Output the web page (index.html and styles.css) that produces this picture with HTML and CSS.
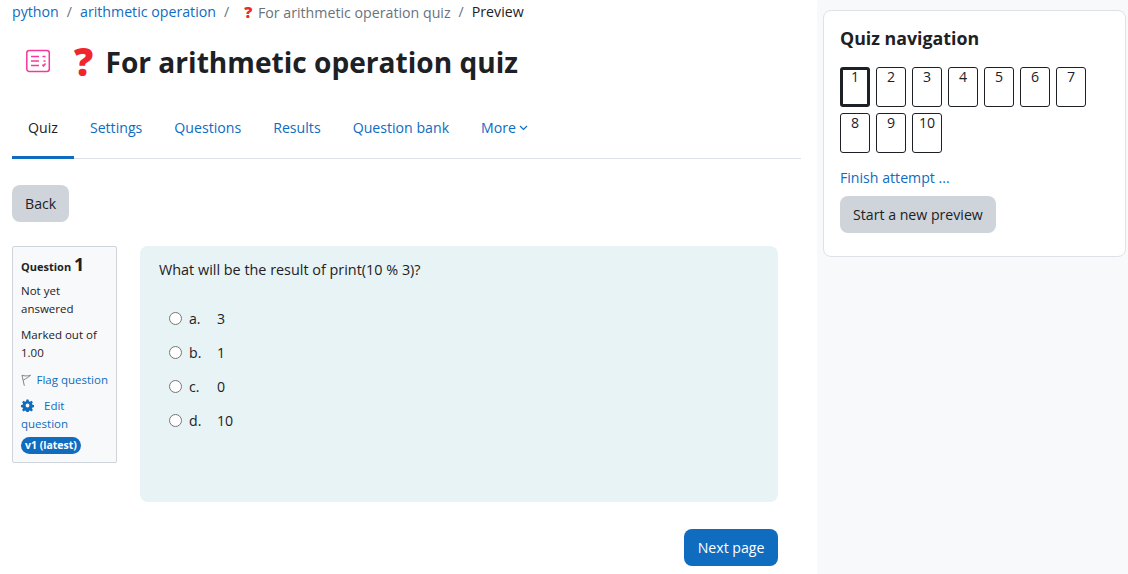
FILE: index.html
```html
<!DOCTYPE html>
<html lang="en">
<head>
    <meta charset="UTF-8">
    <meta name="viewport" content="width=device-width, initial-scale=1.0">
    <title>For arithmetic operation quiz</title>
    <link rel="stylesheet" href="styles.css">
</head>
<body>
    <div class="page">
        <div class="main">
            <div class="breadcrumb">
                <a href="#">python</a><span class="sep">/</span>
                <a href="#">arithmetic operation</a><span class="sep">/</span>
                <span class="crumb-muted"><span class="mark-small">?</span> For arithmetic operation quiz</span><span class="sep">/</span>
                <span>Preview</span>
            </div>
            <div class="heading">
                <span class="quiz-icon">
                    <svg width="26" height="24" viewBox="0 0 26 24" fill="none" stroke="#f7379b" stroke-width="1.5">
                        <rect x="1.800" y="1.500" width="22.500" height="21" rx="2.500"/>
                        <path d="M6 7.500h8M6 12h8M6 16.500h8" stroke-width="1.500"/>
                        <path d="M17.500 7.500h3M18.500 12h2M17.500 15.500l1 1.500 2-2.500" stroke-width="1.500"/>
                    </svg>
                </span>
                <h1><span class="mark">?</span> For arithmetic operation quiz</h1>
            </div>
            <div class="tabs">
                <a href="#" class="tab active">Quiz</a>
                <a href="#" class="tab">Settings</a>
                <a href="#" class="tab">Questions</a>
                <a href="#" class="tab">Results</a>
                <a href="#" class="tab">Question bank</a>
                <a href="#" class="tab">More
                    <svg width="9" height="6" viewBox="0 0 9 6" fill="none" stroke="#0f6cbf" stroke-width="1.200"><path d="M1 1l3.500 3.500L8 1"/></svg>
                </a>
            </div>
            <div class="back-row"><a href="#" class="btn">Back</a></div>
            <div class="question">
                <div class="info">
                    <div class="q-title">Question <span class="q-no">1</span></div>
                    <div class="info-text">Not yet answered</div>
                    <div class="info-text">Marked out of 1.00</div>
                    <div class="flag">
                        <svg width="11" height="13" viewBox="0 0 11 13" fill="none" stroke="#7a7f84" stroke-width="1"><path d="M1 1l2.500 11M1 1c3 1 6 1 9 0C8 3 6 4 2.500 6"/></svg>
                        <a href="#">Flag question</a>
                    </div>
                    <div class="edit">
                        <svg class="gear" width="13" height="13" viewBox="0 0 24 24"><path fill="#0f6cbf" fill-rule="evenodd" d="M10 1h4l.6 3.100 2 .8 2.600-1.800 2.800 2.800-1.800 2.600.8 2 3 .5v4l-3 .6-.8 2 1.800 2.600-2.800 2.800-2.600-1.800-2 .8-.6 3.100h-4l-.6-3.100-2-.8-2.600 1.800-2.800-2.800 1.800-2.600-.8-2-3-.6v-4l3-.5.8-2-1.800-2.600 2.800-2.800 2.600 1.800 2-.8zM12 8.500a3.500 3.500 0 1 0 0 7 3.500 3.500 0 0 0 0-7z"/></svg>
                        <a href="#">Edit question</a>
                    </div>
                    <span class="badge">v1 (latest)</span>
                </div>
                <div class="content">
                    <div class="q-text">What will be the result of print(10 % 3)?</div>
                    <div class="answers">
                        <label class="answer"><span class="radio"></span><span class="letter">a.</span>3</label>
                        <label class="answer"><span class="radio"></span><span class="letter">b.</span>1</label>
                        <label class="answer"><span class="radio"></span><span class="letter">c.</span>0</label>
                        <label class="answer"><span class="radio"></span><span class="letter">d.</span>10</label>
                    </div>
                </div>
            </div>
            <div class="next-row"><a href="#" class="btn btn-primary">Next page</a></div>
        </div>
        <div class="side">
            <div class="card">
                <h2>Quiz navigation</h2>
                <div class="nav-grid">
                    <a href="#" class="nav-btn current">1</a>
                    <a href="#" class="nav-btn">2</a>
                    <a href="#" class="nav-btn">3</a>
                    <a href="#" class="nav-btn">4</a>
                    <a href="#" class="nav-btn">5</a>
                    <a href="#" class="nav-btn">6</a>
                    <a href="#" class="nav-btn">7</a>
                    <a href="#" class="nav-btn">8</a>
                    <a href="#" class="nav-btn">9</a>
                    <a href="#" class="nav-btn">10</a>
                </div>
                <a href="#" class="finish">Finish attempt ...</a>
                <a href="#" class="btn">Start a new preview</a>
            </div>
        </div>
    </div>
</body>
</html>
```

FILE: styles.css
```css
html, body {
    margin: 0;
    height: 574px;
    overflow: hidden;
}
body {
    font-family: "Open Sans", "Noto Sans", sans-serif;
    font-size: 14.15px;
    color: #1d2125;
    background: #fff;
}
a {
    color: #0f6cbf;
    text-decoration: none;
}
.page {
    display: flex;
    height: 574px;
}
.main {
    width: 817px;
    box-sizing: border-box;
    padding: 0 16px 0 12px;
}
.side {
    flex: 1;
    background: #f8f9fa;
    padding: 10px 2px 0 6px;
}
.breadcrumb {
    display: flex;
    align-items: center;
    height: 23px;
    font-size: 14.2px;
    white-space: nowrap;
}
.sep {
    margin: 0 8px;
    color: #6a737b;
}
.crumb-muted {
    color: #6a737b;
}
.mark-small {
    color: #f0262c;
    font-weight: 800;
    font-size: 16px;
    margin: 0 2px 0 7px;
}
.heading {
    display: flex;
    align-items: center;
    height: 54px;
    margin-top: 11px;
}
.quiz-icon {
    display: flex;
    margin: 0 23px 0 13px;
}
h1 {
    margin: 0;
    font-size: 28.100px;
    font-weight: 700;
    white-space: nowrap;
}
.mark {
    color: #f0262c;
    font-weight: 800;
    font-size: 38px;
    line-height: 1;
    vertical-align: -3px;
    margin-right: 5px;
}
.tabs {
    display: flex;
    height: 59px;
    margin-top: 11px;
    border-bottom: 1px solid #dee2e6;
    width: 789px;
    align-items: stretch;
}
.tab {
    display: flex;
    align-items: center;
    gap: 3px;
    padding: 0 16px;
    border-bottom: 3px solid transparent;
    margin-bottom: -1px;
}
.tab.active {
    color: #1d2125;
    border-bottom-color: #0f6cbf;
}
.back-row {
    margin-top: 26px;
}
.btn {
    display: inline-block;
    background: #ced4da;
    color: #1d2125;
    padding: 0 13px;
    line-height: 37px;
    border-radius: 8px;
}
.btn-primary {
    background: #0f6cbf;
    color: #fff;
    padding: 0 13.5px;
}
.question {
    display: flex;
    gap: 23px;
    margin-top: 24px;
    align-items: flex-start;
}
.info {
    width: 105px;
    height: 217px;
    box-sizing: border-box;
    background: #f8f9fa;
    border: 1px solid #ced4da;
    border-radius: 2px;
    padding: 8px;
    font-size: 11.500px;
    line-height: 18px;
}
.q-title {
    font-weight: 700;
    font-size: 11px;
    height: 27px;
    white-space: nowrap;
}
.q-no {
    font-size: 18px;
}
.info-text {
    margin-bottom: 8px;
}
.flag {
    display: flex;
    gap: 5px;
    align-items: center;
    margin-bottom: 8px;
    padding-top: 1px;
    white-space: nowrap;
}
.gear {
    vertical-align: -2px;
    margin-right: 7px;
}
.badge {
    display: inline-block;
    background: #0f6cbf;
    color: #fff;
    font-weight: 700;
    font-size: 10.500px;
    line-height: 17px;
    margin-top: 4px;
    padding: 0 4px;
    border-radius: 9px;
    white-space: nowrap;
}
.content {
    width: 638px;
    height: 256px;
    box-sizing: border-box;
    background: #e7f3f5;
    border-radius: 8px;
    padding: 13px 19px;
}
.q-text {
    font-size: 14.400px;
    line-height: 21px;
}
.answers {
    margin-top: 21px;
}
.answer {
    display: flex;
    align-items: center;
    height: 34px;
    padding-left: 10px;
}
.radio {
    width: 11px;
    height: 11px;
    border: 1px solid #767676;
    border-radius: 50%;
    background: #fff;
    margin-right: 7px;
}
.letter {
    width: 28px;
}
.next-row {
    display: flex;
    justify-content: flex-end;
    width: 766px;
    margin-top: 27px;
}
.card {
    height: 247px;
    box-sizing: border-box;
    background: #fff;
    border: 1px solid #dee2e6;
    border-radius: 8px;
    padding: 16px;
}
h2 {
    margin: 0 0 17px;
    font-size: 17.800px;
    font-weight: 700;
    line-height: 23px;
}
.nav-grid {
    display: flex;
    flex-wrap: wrap;
    gap: 6px;
    width: 260px;
}
.nav-btn {
    width: 30px;
    height: 40px;
    box-sizing: border-box;
    border: 1px solid #1d2125;
    border-radius: 3px;
    color: #1d2125;
    text-align: center;
    line-height: 18px;
}
.nav-btn.current {
    border-width: 3px;
    line-height: 14px;
}
.finish {
    display: block;
    margin: 15px 0 8px;
    line-height: 20px;
}
```
